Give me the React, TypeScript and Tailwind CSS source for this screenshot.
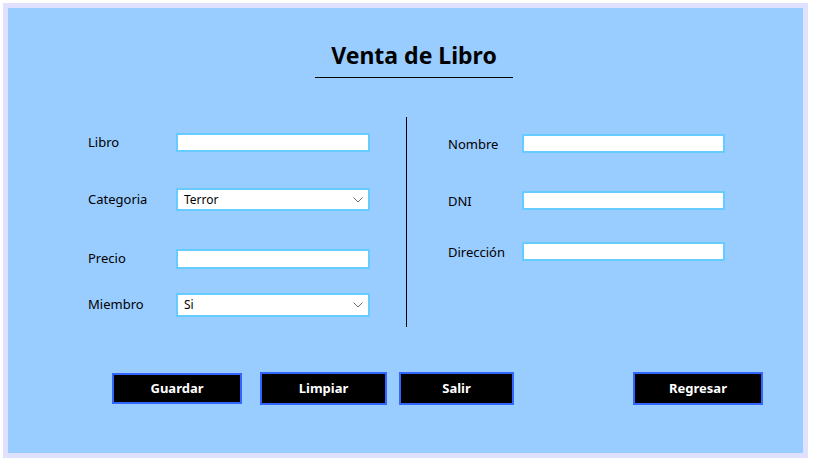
import React from "react";

const font = { fontFamily: '"Noto Sans", "Open Sans", sans-serif' };

function Chevron() {
  return (
    <svg width="10" height="6" viewBox="0 0 10 6" className="mr-[5px]">
      <polyline points="0.5,0.5 5,5 9.5,0.5" fill="none" stroke="#6b6b6b" strokeWidth="1" />
    </svg>
  );
}

function TextBox({ w, h }: { w: string; h: string }) {
  return <div className={`${w} ${h} border-2 border-[#66ccff] bg-white`} />;
}

function Combo({ value, h }: { value: string; h: string }) {
  return (
    <div className={`w-[194px] ${h} border-2 border-[#66ccff] bg-white flex items-center justify-between pl-[6px]`}>
      <span className="text-[12px] text-black leading-none">{value}</span>
      <Chevron />
    </div>
  );
}

function Btn({ label, w, h, cls }: { label: string; w: string; h: string; cls?: string }) {
  return (
    <div
      className={`${w} ${h} ${cls ?? ""} bg-black border-2 border-[#3366ff] flex items-center justify-center text-white font-bold text-[13px] pt-[1px]`}
    >
      {label}
    </div>
  );
}

export default function App() {
  return (
    <div className="w-[814px] h-[462px] bg-white pt-[3px] pl-[3px] pr-[6px] pb-[4px]" style={font}>
      <div className="w-full h-full border-[5px] border-[#e0e0ff] bg-[#99ccff] flex flex-col">
        {/* Title */}
        <div className="ml-[307px] w-[198px] mt-[28px] h-[42px] pt-[3px] border-b border-black flex justify-center">
          <div className="text-[23px] font-bold text-black leading-[32px]">Venta de Libro</div>
        </div>

        {/* Form */}
        <div className="flex mt-[39px] h-[210px]">
          <div className="ml-[80px] w-[282px] flex flex-col">
            <div className="flex items-center mt-[16px] h-[19px]">
              <span className="w-[88px] text-[13px] text-black">Libro</span>
              <TextBox w="w-[194px]" h="h-[19px]" />
            </div>
            <div className="flex items-center mt-[36px] h-[23px]">
              <span className="w-[88px] text-[13px] text-black">Categoria</span>
              <Combo value="Terror" h="h-[23px]" />
            </div>
            <div className="flex items-center mt-[38px] h-[20px]">
              <span className="w-[88px] text-[13px] text-black">Precio</span>
              <TextBox w="w-[194px]" h="h-[20px]" />
            </div>
            <div className="flex items-center mt-[24px] h-[24px]">
              <span className="w-[88px] text-[13px] text-black">Miembro</span>
              <Combo value="Si" h="h-[24px]" />
            </div>
          </div>

          <div className="ml-[36px] w-px h-full bg-black" />

          <div className="ml-[41px] flex flex-col">
            <div className="flex items-center mt-[17px] h-[19px]">
              <span className="w-[74px] text-[13px] text-black pt-[2px]">Nombre</span>
              <TextBox w="w-[203px]" h="h-[19px]" />
            </div>
            <div className="flex items-center mt-[38px] h-[19px]">
              <span className="w-[74px] text-[13px] text-black pt-[3px]">DNI</span>
              <TextBox w="w-[203px]" h="h-[19px]" />
            </div>
            <div className="flex items-center mt-[32px] h-[19px]">
              <span className="w-[74px] text-[13px] text-black pt-[3px]">Dirección</span>
              <TextBox w="w-[203px]" h="h-[19px]" />
            </div>
          </div>
        </div>

        {/* Buttons */}
        <div className="flex items-center mt-[45px] ml-[104px] h-[33px]">
          <Btn label="Guardar" w="w-[130px]" h="h-[31px]" />
          <Btn label="Limpiar" w="w-[127px]" h="h-[33px]" cls="ml-[18px]" />
          <Btn label="Salir" w="w-[115px]" h="h-[33px]" cls="ml-[12px]" />
          <Btn label="Regresar" w="w-[130px]" h="h-[33px]" cls="ml-[119px]" />
        </div>
      </div>
    </div>
  );
}
